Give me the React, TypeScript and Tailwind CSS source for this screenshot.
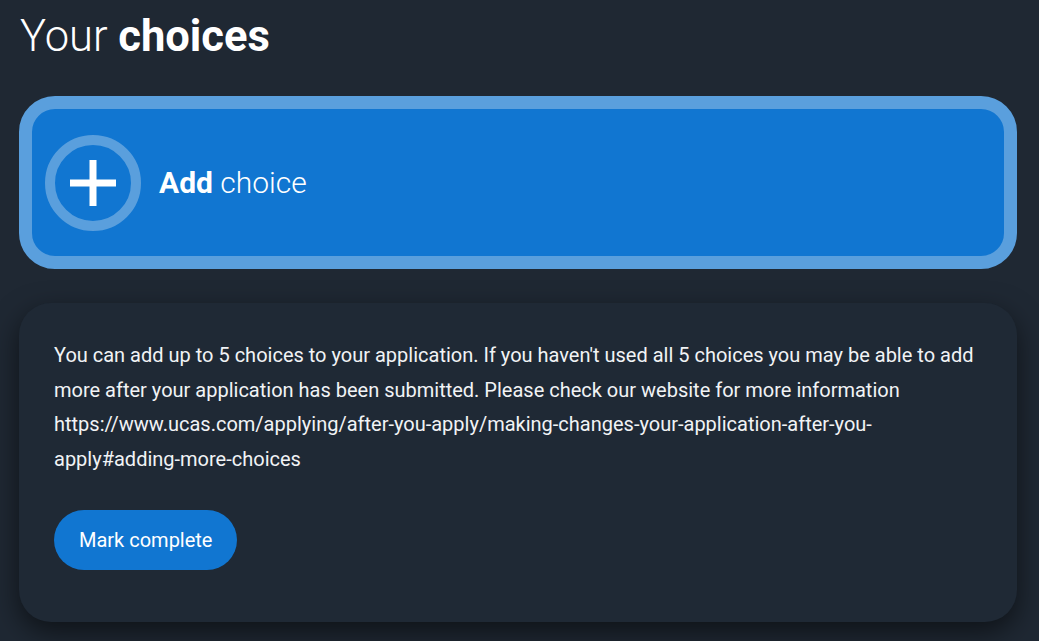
export default function App() {
  return (
    <div className="min-h-[641px] w-full bg-[#1f2833] pl-[19px] pr-[22px] pt-[11px] pb-[20px] font-['Roboto',sans-serif] text-white">
      <h1 className="pl-px text-[43.5px] leading-[1.2] font-light">
        Your <span className="font-bold">choices</span>
      </h1>

      {/* Add choice tile */}
      <button className="mt-[33px] flex h-[173px] w-full items-center rounded-[36px] border-[13px] border-[#5a9fdd] bg-[#1176d1] pl-[13px] text-left">
        <span className="flex h-[96px] w-[96px] shrink-0 items-center justify-center rounded-full border-[10px] border-[#5a9fdd]">
          <svg width="46" height="46" viewBox="0 0 46 46">
            <rect x="19.5" y="0" width="7" height="46" fill="white" />
            <rect x="0" y="19.5" width="46" height="7" fill="white" />
          </svg>
        </span>
        <span className="ml-[18px] text-[30px] font-light">
          <span className="font-bold">Add</span> choice
        </span>
      </button>

      {/* Info card */}
      <div className="mt-[34px] rounded-[32px] bg-[#1f2935] px-[35px] pt-[35px] pb-[52px] shadow-[0_10px_28px_rgba(0,0,0,0.55)]">
        <p className="text-[20px] leading-[34.5px] text-[#f1f3f5]">
          You can add up to 5 choices to your application. If you haven't used all 5 choices you may be able to add more after your application has been submitted. Please check our website for more information https://www.ucas.com/applying/after-you-apply/making-changes-your-application-after-you-apply#adding-more-choices
        </p>
        <button className="mt-[34px] h-[60px] rounded-full bg-[#1176d1] px-[25px] text-[20px] text-white">
          Mark complete
        </button>
      </div>
    </div>
  );
}
